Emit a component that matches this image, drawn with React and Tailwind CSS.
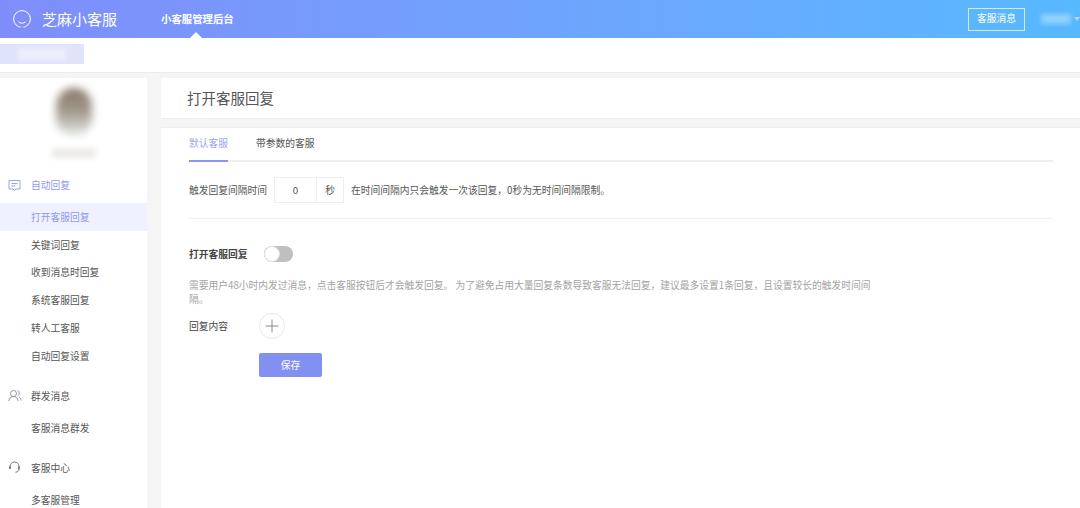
const font = { fontFamily: '"Noto Sans CJK SC", "Noto Sans", sans-serif' };

const subItems = ["关键词回复", "收到消息时回复", "系统客服回复", "转人工客服", "自动回复设置"];

function Header() {
  return (
    <header className="h-[38px] shrink-0 flex items-center bg-gradient-to-r from-[#7f8dfb] to-[#56b9ff] text-white">
      <svg className="ml-[12px] w-[20px] h-[20px]" viewBox="0 0 20 20" fill="none" stroke="#fff" strokeWidth="1">
        <circle cx="10" cy="10" r="8.400" />
        <path d="M6.500 12.800c1.600 1.800 5.400 1.800 7 0" />
        <path d="M8.500 18.400h3" strokeWidth="1.600" stroke="#7f8dfb" />
      </svg>
      <span className="ml-[10px] text-[15px] w-[76px] whitespace-nowrap">芝麻小客服</span>
      <div className="relative h-full flex items-center ml-[43px]">
        <span className="text-[10.400px] font-bold whitespace-nowrap">小客服管理后台</span>
        <span className="absolute bottom-0 left-[29px] w-0 h-0 border-x-[6px] border-x-transparent border-b-[6px] border-b-white" />
      </div>
      <button className="ml-auto w-[57px] h-[23px] border border-[#d5e6ff] text-[9.750px] leading-none">客服消息</button>
      <div className="ml-[16px] w-[30px] h-[10px] bg-[#8fd0ff] blur-[2px]" />
      <span className="ml-[3px] w-0 h-0 border-x-[3px] border-x-transparent border-t-[4px] border-t-[#c5cfe0]" />
    </header>
  );
}

function GroupTitle({ icon, active, children, className }) {
  return (
    <div className={`flex items-center h-[28px] pl-[8px] text-[9.750px] ${active ? "text-[#8f99f0]" : "text-[#555]"} ${className}`}>
      <span className="w-[23px] flex">{icon}</span>
      {children}
    </div>
  );
}

function Sidebar() {
  return (
    <aside className="w-[147px] shrink-0 bg-white overflow-hidden">
      <div className="h-[93px] flex flex-col items-center">
        <div className="mt-[10px] w-[36px] h-[48px] rounded-full bg-gradient-to-b from-[#857865] via-[#a49b8e] to-[#e6eeec] blur-[4px]" />
        <div className="mt-[13px] w-[44px] h-[8px] bg-[#e8e6e4] blur-[3px]" />
      </div>
      <GroupTitle
        active
        icon={
          <svg className="w-[13px] h-[13px]" viewBox="0 0 13 13" fill="none" stroke="#9aa3f2" strokeWidth="1">
            <path d="M1 1.500h11v8.500H8l-1.500 1.500L5 10H1z" />
            <path d="M3.500 4.500h6M3.500 7h4" />
          </svg>
        }
      >
        自动回复
      </GroupTitle>
      <div className="h-[4px]" />
      <div className="h-[28px] flex items-center pl-[31px] text-[9.750px] bg-[#eff2fe] text-[#8f99f0]">打开客服回复</div>
      {subItems.map((item) => (
        <div key={item} className="h-[27.800px] flex items-center pl-[31px] text-[9.750px] text-[#555]">
          {item}
        </div>
      ))}
      <GroupTitle
        className="mt-[12px]"
        icon={
          <svg className="w-[14px] h-[13px]" viewBox="0 0 14 13" fill="none" stroke="#888" strokeWidth="0.9">
            <circle cx="5.500" cy="4.500" r="3" />
            <path d="M0.800 12c.4-3 2.300-4.500 4.700-4.500s4.300 1.500 4.700 4.500" />
            <path d="M9.500 1.500c2.200.3 2.500 4.500.2 5.300M11 8c1.200.6 2 2 2.200 3.500" />
          </svg>
        }
      >
        群发消息
      </GroupTitle>
      <div className="h-[28px] mt-[4px] flex items-center pl-[31px] text-[9.750px] text-[#555]">客服消息群发</div>
      <GroupTitle
        className="mt-[12px]"
        icon={
          <svg className="w-[13px] h-[13px]" viewBox="0 0 13 13" fill="none" stroke="#777" strokeWidth="1">
            <path d="M2 7V5.500a4.500 4.500 0 0 1 9 0V7" />
            <path d="M2 5.500v2.500M11 5.500v2.500" strokeWidth="1.800" />
            <path d="M11 8c0 2-1.500 3.200-3.500 3.200" />
          </svg>
        }
      >
        客服中心
      </GroupTitle>
      <div className="h-[28px] mt-[4px] flex items-center pl-[31px] text-[9.750px] text-[#555]">多客服管理</div>
    </aside>
  );
}

function Content() {
  return (
    <main className="flex-1 min-w-0 ml-[14px] flex flex-col">
      <div className="h-[41px] shrink-0 bg-white border-b border-[#eeeeee] flex items-center pl-[26px] text-[14.500px] text-[#555]">
        打开客服回复
      </div>
      <section className="mt-[8px] flex-1 bg-white border-t border-[#eeeeee] pl-[28px] pr-[27px]">
        <div className="flex h-[34px] border-b-2 border-[#eeeeee] text-[9.750px]">
          <div className="w-[39px] h-[34px] shrink-0 border-b-2 border-[#8a94f5] text-[#9aa3f2] pt-[8px] leading-[15px] whitespace-nowrap">默认客服</div>
          <div className="ml-[28px] text-[#555] pt-[8px] leading-[15px] whitespace-nowrap">带参数的客服</div>
        </div>

        <div className="flex items-center h-[26px] mt-[15px] text-[9.750px] text-[#555]">
          <span className="w-[85px]">触发回复间隔时间</span>
          <div className="w-[70px] h-[26px] flex border border-[#eeeeee]">
            <span className="w-[42px] flex items-center justify-center border-r border-[#eeeeee]">0</span>
            <span className="flex-1 flex items-center justify-center">秒</span>
          </div>
          <span className="ml-[7px] whitespace-nowrap">在时间间隔内只会触发一次该回复，0秒为无时间间隔限制。</span>
        </div>
        <div className="mt-[15px] border-t border-[#f1f1f1]" />

        <div className="flex items-center h-[16px] mt-[27px] text-[9.750px] font-bold text-[#444]">
          <span className="w-[75px]">打开客服回复</span>
          <div className="w-[29px] h-[16px] rounded-full bg-[#bfbfbf] relative">
            <span className="absolute left-0 top-0 w-[16px] h-[16px] rounded-full bg-white border border-[#e2e2e2]" />
          </div>
        </div>

        <p className="w-[684px] mt-[16px] text-[9.750px] leading-[14px] text-[#a3a3a3]">
          需要用户48小时内发过消息，点击客服按钮后才会触发回复。 为了避免占用大量回复条数导致客服无法回复，建议最多设置1条回复，且设置较长的触发时间间隔。
        </p>

        <div className="flex items-center mt-[7px] text-[9.750px] text-[#444]">
          <span className="w-[70px]">回复内容</span>
          <div className="w-[26px] h-[26px] rounded-full border border-[#e8e8e8] flex items-center justify-center">
            <svg className="w-[14px] h-[14px]" viewBox="0 0 14 14" stroke="#8a8a8a" strokeWidth="1">
              <path d="M7 0.500v13M0.500 7h13" />
            </svg>
          </div>
        </div>

        <button className="block ml-[70px] mt-[14px] w-[63px] h-[24px] rounded-[2px] bg-[#8290f2] text-white text-[9.750px]">保存</button>
      </section>
    </main>
  );
}

export default function App() {
  return (
    <div className="h-[508px] w-[1080px] overflow-hidden flex flex-col bg-[#f5f5f5]" style={font}>
      <Header />
      <div className="h-[35px] shrink-0 bg-white border-b border-[#ececec] pt-[6px]">
        <div className="w-[84px] h-[20px] bg-[#e0e4fb] flex items-center justify-center">
          <div className="w-[48px] h-[12px] bg-[#eceefd] blur-[2px]" />
        </div>
      </div>
      <div className="flex-1 flex min-h-0 pt-[5px]">
        <Sidebar />
        <Content />
      </div>
    </div>
  );
}
